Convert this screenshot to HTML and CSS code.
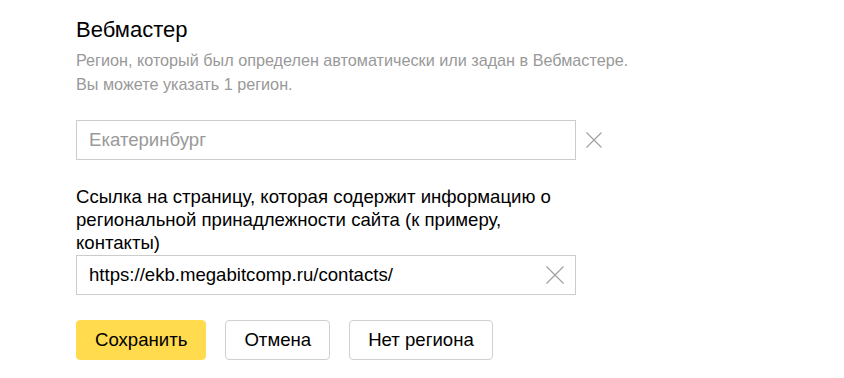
FILE: index.html
```html
<!DOCTYPE html>
<html lang="ru">
<head>
<meta charset="utf-8">
<link rel="stylesheet" href="styles.css">
</head>
<body>
<div class="page">
  <h1 class="title">Вебмастер</h1>
  <p class="hint">Регион, который был определен автоматически или задан в Вебмастере.<br>Вы можете указать 1 регион.</p>
  <div class="row">
    <div class="input">
      <span class="placeholder">Екатеринбург</span>
    </div>
    <span class="clear outside" aria-label="Удалить">
      <svg width="16" height="16" viewBox="0 0 16 16"><path d="M0.5 0.5 L15.5 15.5 M15.5 0.5 L0.5 15.5" stroke="#9e9e9e" stroke-width="1.1" fill="none"/></svg>
    </span>
  </div>
  <p class="label">Ссылка на страницу, которая содержит информацию о<br>региональной принадлежности сайта (к примеру,<br>контакты)</p>
  <div class="input value-input">
    <span class="value">https://ekb.megabitcomp.ru/contacts/</span>
    <span class="clear inside">
      <svg width="18" height="18" viewBox="0 0 18 18"><path d="M0.5 0.5 L17.5 17.5 M17.5 0.5 L0.5 17.5" stroke="#9e9e9e" stroke-width="1.1" fill="none"/></svg>
    </span>
  </div>
  <div class="buttons">
    <button class="btn btn-primary">Сохранить</button>
    <button class="btn">Отмена</button>
    <button class="btn">Нет региона</button>
  </div>
</div>
</body>
</html>
```
FILE: styles.css
```css
html, body {
  margin: 0;
  padding: 0;
  background: #fff;
}
body {
  font-family: "Liberation Sans", Arial, sans-serif;
  color: #000;
}
.page {
  padding: 16px 0 0 76px;
}
.title {
  margin: 0;
  font-size: 22px;
  font-weight: normal;
  line-height: 28px;
}
.hint {
  margin: 4px 0 0;
  font-size: 16.2px;
  line-height: 24px;
  color: #999;
}
.row {
  display: flex;
  align-items: center;
  margin-top: 24px;
}
.input {
  box-sizing: border-box;
  width: 500px;
  height: 40px;
  border: 1px solid #cccccc;
  display: flex;
  align-items: center;
  padding: 0 12px;
  font-size: 18.6px;
}
.placeholder {
  color: #999;
}
.value {
  color: #000;
  flex: 1;
}
.clear {
  display: flex;
  align-items: center;
  justify-content: center;
}
.clear.outside {
  margin-left: 10px;
  width: 16px;
  height: 16px;
}
.clear.inside {
  width: 18px;
  height: 18px;
  margin-right: -1px;
}
.label {
  margin: 25px 0 0;
  font-size: 18.6px;
  line-height: 23px;
}
.value-input {
  margin-top: 1px;
}
.buttons {
  display: flex;
  gap: 19px;
  margin-top: 25px;
}
.btn {
  box-sizing: border-box;
  height: 40px;
  padding: 0 18px;
  border: 1px solid #d0d0d0;
  border-radius: 4px;
  background: #fff;
  font-family: "Liberation Sans", Arial, sans-serif;
  font-size: 18.6px;
  color: #000;
  cursor: pointer;
}
.btn-primary {
  background: #ffdb4d;
  border-color: #ffdb4d;
}
```
